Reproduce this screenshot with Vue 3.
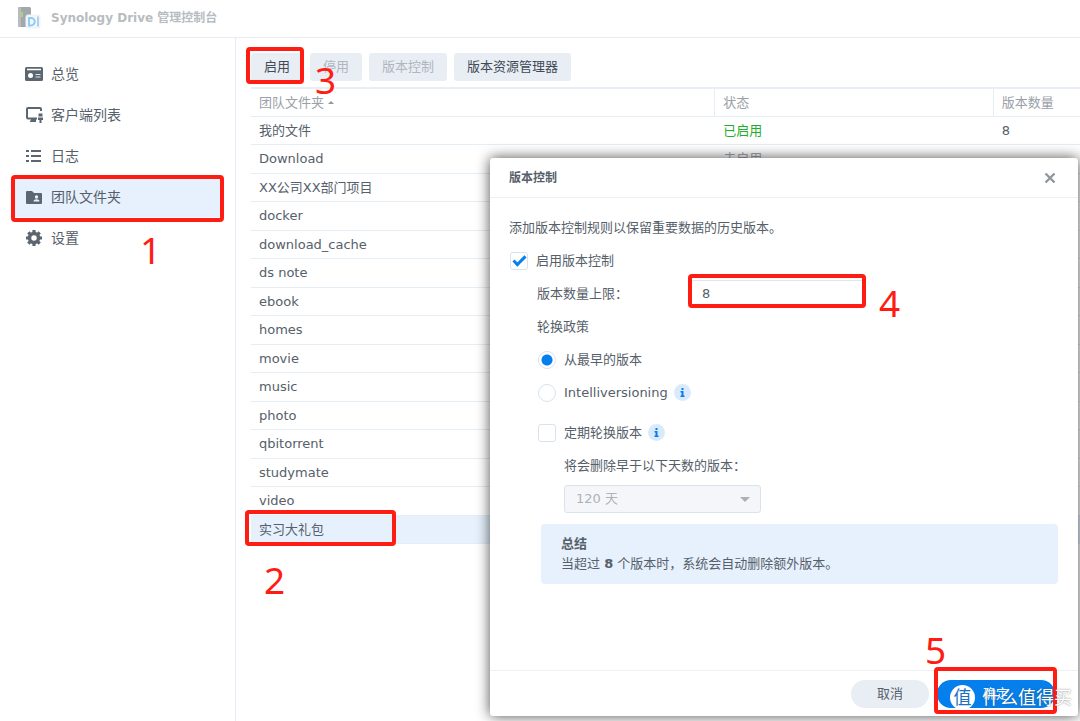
<script setup>
import { ref } from 'vue'

const navItems = [
  { id: 'overview', label: '总览' },
  { id: 'clients', label: '客户端列表' },
  { id: 'log', label: '日志' },
  { id: 'team', label: '团队文件夹' },
  { id: 'settings', label: '设置' },
]
const activeNav = ref('team')

const folders = [
  { name: '我的文件', status: '已启用', versions: '8', enabled: true },
  { name: 'Download', status: '未启用' },
  { name: 'XX公司XX部门项目' },
  { name: 'docker' },
  { name: 'download_cache' },
  { name: 'ds note' },
  { name: 'ebook' },
  { name: 'homes' },
  { name: 'movie' },
  { name: 'music' },
  { name: 'photo' },
  { name: 'qbitorrent' },
  { name: 'studymate' },
  { name: 'video' },
  { name: '实习大礼包' },
]
const selectedFolder = ref('实习大礼包')

const versioning = ref(true)
const maxVersions = ref('8')
const policy = ref('earliest')
const rotate = ref(false)
</script>

<template>
  <div class="app">
    <header class="titlebar">
      <svg class="logo" width="24" height="24" viewBox="0 0 24 24" aria-hidden="true">
        <rect x="1" y="1" width="13" height="20" rx="1.500" fill="#a3a6aa" />
        <rect x="1" y="1" width="3" height="20" rx="1" fill="#b9bbbe" />
        <rect x="4" y="6" width="2" height="5" fill="#a5d67c" />
        <rect x="9" y="9" width="14" height="13" rx="2" fill="#f3f7fa" stroke="#eef2f5" />
        <path d="M12 12h2a3.500 3.500 0 0 1 0 7.500H12z" fill="none" stroke="#8ccdf5" stroke-width="2" />
        <path d="M21 10.500v10" stroke="#9cc3f2" stroke-width="1.500" />
      </svg>
      <h1>Synology Drive 管理控制台</h1>
    </header>

    <div class="main">
      <nav class="sidebar">
        <a
          v-for="item in navItems"
          :key="item.id"
          href="#"
          :class="['nav-item', { active: activeNav === item.id }]"
          @click.prevent="activeNav = item.id"
        >
          <svg width="20" height="20" viewBox="0 0 20 20" aria-hidden="true">
            <g v-if="item.id === 'overview'">
              <rect x="1" y="3" width="18" height="14" rx="1.500" fill="#5b6670" />
              <path d="M3 5.500h14" stroke="#fff" stroke-width="1.500" />
              <circle cx="6.500" cy="11.500" r="2.500" fill="#fff" />
              <path d="M11.500 10.500h5M11.500 13h5" stroke="#dfe3e6" />
            </g>
            <g v-else-if="item.id === 'clients'">
              <path d="M13 13.500H4a1 1 0 0 1-1-1V4a1 1 0 0 1 1-1h12a1 1 0 0 1 1 1v2" fill="none" stroke="#5b6670" stroke-width="2" />
              <path d="M7 14h5v3H6v-1.500h1z" fill="#5b6670" />
              <path d="M14.500 8.500h4v3h-4zM14 12.500h5V15h-1.500v3h-2v-3H14z" fill="#5b6670" />
            </g>
            <g v-else-if="item.id === 'log'" fill="#5b6670">
              <path d="M2 4h3v2H2zM7 4h10v2H7zM2 9h3v2H2zM7 9h10v2H7zM2 14h3v2H2zM7 14h10v2H7z" />
            </g>
            <g v-else-if="item.id === 'team'">
              <path d="M2 5a1 1 0 0 1 1-1h5l2 2h7a1 1 0 0 1 1 1v9a1 1 0 0 1-1 1H3a1 1 0 0 1-1-1z" fill="#5b6670" />
              <circle cx="12.500" cy="10" r="1.700" fill="#e6f1fd" />
              <path d="M9.500 14.500c0-3 6-3 6 0z" fill="#e6f1fd" />
            </g>
            <g v-else>
              <circle cx="10" cy="10" r="4.500" fill="none" stroke="#5b6670" stroke-width="3.500" />
              <path
                d="M10 2v3M10 15v3M2 10h3M15 10h3M4.300 4.300l2 2M13.700 13.700l2 2M4.300 15.700l2-2M13.700 6.300l2-2"
                stroke="#5b6670"
                stroke-width="3.200"
              />
            </g>
          </svg>
          <span>{{ item.label }}</span>
        </a>
      </nav>

      <section class="content">
        <div class="toolbar">
          <button type="button" class="tool">启用</button>
          <button type="button" class="tool" disabled>停用</button>
          <button type="button" class="tool" disabled>版本控制</button>
          <button type="button" class="tool">版本资源管理器</button>
        </div>

        <table class="folders">
          <colgroup>
            <col class="col-name" />
            <col class="col-status" />
            <col />
          </colgroup>
          <thead>
            <tr>
              <th scope="col">团队文件夹<i class="sort"></i></th>
              <th scope="col">状态</th>
              <th scope="col">版本数量</th>
            </tr>
          </thead>
          <tbody>
            <tr
              v-for="folder in folders"
              :key="folder.name"
              :class="{ selected: folder.name === selectedFolder }"
              @click="selectedFolder = folder.name"
            >
              <td>{{ folder.name }}</td>
              <td :class="folder.enabled ? 'on' : 'off'">{{ folder.status }}</td>
              <td>{{ folder.versions }}</td>
            </tr>
          </tbody>
        </table>
      </section>
    </div>

    <div class="dialog" role="dialog" aria-labelledby="dialog-title">
      <div class="dialog-head">
        <h2 id="dialog-title">版本控制</h2>
        <button type="button" class="close" aria-label="关闭">
          <svg width="12" height="12" viewBox="0 0 12 12" aria-hidden="true">
            <path d="M1.500 1.500l9 9M10.500 1.500l-9 9" stroke="#8f979e" stroke-width="2.400" />
          </svg>
        </button>
      </div>

      <form class="dialog-body" @submit.prevent>
        <p class="line">添加版本控制规则以保留重要数据的历史版本。</p>
        <div class="line">
          <input id="versioning" v-model="versioning" type="checkbox" />
          <label for="versioning">启用版本控制</label>
        </div>
        <div class="line level1">
          <label for="max" class="field-label">版本数量上限：</label>
          <input id="max" v-model="maxVersions" type="text" class="text" />
        </div>
        <div class="line level1">轮换政策</div>
        <div class="line level1">
          <input id="earliest" v-model="policy" type="radio" value="earliest" name="policy" />
          <label for="earliest">从最早的版本</label>
        </div>
        <div class="line level1">
          <input id="intelli" v-model="policy" type="radio" value="intelli" name="policy" />
          <label for="intelli">Intelliversioning</label>
          <svg class="info" width="17" height="17" viewBox="0 0 17 17" aria-hidden="true">
            <circle cx="8.500" cy="8.500" r="8.500" fill="#d9eafc" />
            <path d="M7.500 4h2v2h-2zM6.500 7h3v4.500h1V13h-4v-1.500h1v-3h-1z" fill="#0a7ee8" />
          </svg>
        </div>
        <div class="line level1 spaced">
          <input id="rotate" v-model="rotate" type="checkbox" />
          <label for="rotate">定期轮换版本</label>
          <svg class="info" width="17" height="17" viewBox="0 0 17 17" aria-hidden="true">
            <circle cx="8.500" cy="8.500" r="8.500" fill="#d9eafc" />
            <path d="M7.500 4h2v2h-2zM6.500 7h3v4.500h1V13h-4v-1.500h1v-3h-1z" fill="#0a7ee8" />
          </svg>
        </div>
        <div class="line level2"><label for="days">将会删除早于以下天数的版本：</label></div>
        <div class="line level2 select-line">
          <div class="select">
            <select id="days" disabled>
              <option>120 天</option>
            </select>
          </div>
        </div>
        <div class="summary">
          <strong>总结</strong>
          <p>当超过 <b>8</b> 个版本时，系统会自动删除额外版本。</p>
        </div>
      </form>

      <div class="dialog-foot">
        <button type="button" class="pill">取消</button>
        <button type="button" class="pill primary">确定</button>
      </div>
    </div>

    <div class="mark mark-nav"></div>
    <div class="mark mark-enable"></div>
    <div class="mark mark-folder"></div>
    <div class="mark mark-max"></div>
    <div class="mark mark-ok"></div>
    <span class="step step-1">1</span>
    <span class="step step-2">2</span>
    <span class="step step-3">3</span>
    <span class="step step-4">4</span>
    <span class="step step-5">5</span>

    <div class="watermark"><span class="badge">值</span><span>什么值得买</span></div>
  </div>
</template>

<style>
body {
  margin: 0;
  background: #fff;
}
</style>

<style scoped>
.app {
  position: relative;
  display: flex;
  flex-direction: column;
  min-height: 100vh;
  overflow: hidden;
  box-sizing: border-box;
  color: #56606a;
  font-family: 'DejaVu Sans', 'Noto Sans CJK SC', sans-serif;
  font-size: 13px;
  line-height: 20px;
}
.app *,
.app *::before,
.app *::after {
  box-sizing: border-box;
}
h1,
h2,
p {
  margin: 0;
}
button,
input,
select {
  margin: 0;
  font: inherit;
  color: inherit;
}

.titlebar {
  display: flex;
  align-items: center;
  gap: 10px;
  height: 38px;
  padding: 0 17px 2px;
  border-bottom: 1px solid #e8ecf1;
}
.titlebar h1 {
  color: #b8bcc0;
  font-size: 12px;
}

.main {
  display: flex;
  flex: 1;
}
.sidebar {
  width: 236px;
  padding: 15px 13px 0 12px;
  border-right: 1px solid #e3ebf3;
}
.nav-item {
  display: flex;
  align-items: center;
  gap: 7px;
  height: 41px;
  padding: 0 12px;
  color: #56606a;
  font-size: 14px;
  text-decoration: none;
}
.nav-item.active {
  background: #e6f1fd;
}

.content {
  flex: 1;
  min-width: 0;
  padding: 15px 0 0 15px;
}
.toolbar {
  display: flex;
  gap: 7px;
  margin-bottom: 6px;
}
.tool {
  height: 28px;
  padding: 0 13px;
  border: 0;
  border-radius: 3px;
  background: #e9eef5;
  color: #414b55;
}
.tool:disabled {
  color: #b0b6bd;
}

.folders {
  width: 100%;
  border-collapse: separate;
  border-spacing: 0;
  border-top: 2px solid #e8eef4;
  table-layout: fixed;
}
.col-name {
  width: 56%;
}
.col-status {
  width: 33.6%;
}
.folders th,
.folders td {
  height: 28px;
  padding: 0 8px;
  border-bottom: 1px solid #e5edf5;
  text-align: left;
  white-space: nowrap;
}
.folders th {
  border-right: 1px solid #e5edf5;
  color: #9aa1a8;
  font-weight: 400;
}
.folders th:last-child {
  border-right: 0;
}
.folders tbody tr:nth-child(even) td {
  height: 29px;
}
.folders .selected td {
  background: #e6f1fd;
}
.folders .on {
  color: #1fae2b;
}
.folders .off {
  color: #a3a8ad;
}
.sort {
  display: inline-block;
  margin: 0 0 3px 4px;
  border: 3px solid transparent;
  border-top: 0;
  border-bottom-color: #8f979e;
}

.dialog {
  position: absolute;
  top: 158px;
  right: 2px;
  bottom: 5px;
  display: flex;
  flex-direction: column;
  width: 588px;
  border-radius: 3px;
  background: #fff;
  box-shadow: 0 0 14px rgba(0, 0, 0, 0.7);
}
.dialog-head {
  display: flex;
  align-items: center;
  justify-content: space-between;
  height: 40px;
  padding: 0 20px 0 19px;
  border-bottom: 1px solid #edf1f5;
}
.dialog-head h2 {
  font-size: 12px;
}
.close {
  display: flex;
  padding: 2px;
  border: 0;
  background: none;
}
.dialog-body {
  flex: 1;
  padding: 13px 20px 0 19px;
}
.line {
  display: flex;
  align-items: center;
  height: 33px;
}
.level1 {
  padding-left: 28px;
}
.level2 {
  padding-left: 55px;
}
.spaced {
  margin-top: 7px;
}
.field-label {
  width: 154px;
}
input[type='checkbox'],
input[type='radio'] {
  width: 18px;
  height: 18px;
  margin: 0 8px 0 1px;
  border: 1px solid #d9e3ed;
  border-radius: 3px;
  background: #fff;
  appearance: none;
}
input[type='radio'] {
  border-radius: 50%;
}
input[type='radio']:checked {
  background: radial-gradient(circle, #057feb 5px, #fff 6px);
}
input[type='checkbox']:checked {
  position: relative;
}
input[type='checkbox']:checked::after {
  position: absolute;
  top: 3px;
  left: 2px;
  width: 13px;
  height: 7px;
  border: solid #057feb;
  border-width: 0 0 3px 3px;
  content: '';
  transform: rotate(-45deg);
}
.text {
  width: 175px;
  height: 28px;
  padding: 0 10px;
  border: 1px solid #dfe7ef;
  border-radius: 3px;
}
.info {
  margin-left: 6px;
}
.select-line {
  margin-bottom: 9px;
}
.select {
  position: relative;
  width: 197px;
}
.select::after {
  position: absolute;
  top: 12px;
  right: 11px;
  border: 5px solid transparent;
  border-top-color: #a9b0b7;
  border-bottom: 0;
  content: '';
}
.select select {
  display: block;
  width: 100%;
  height: 28px;
  padding: 0 11px;
  border: 1px solid #d9e3ed;
  border-radius: 3px;
  background: #f4f6fa;
  color: #acb2b8;
  opacity: 1;
  appearance: none;
}
.summary {
  margin-left: 32px;
  padding: 10px 20px;
  border-radius: 4px;
  background: #e6f1fd;
}
.summary strong {
  display: block;
}
.dialog-foot {
  display: flex;
  justify-content: flex-end;
  gap: 8px;
  padding: 9px 23px 8px;
  border-top: 1px solid #edf1f5;
}
.pill {
  width: 78px;
  height: 28px;
  border: 0;
  border-radius: 14px;
  background: #e9eef5;
}
.primary {
  width: 118px;
  background: #057feb;
  color: #fff;
}

.mark {
  position: absolute;
  border: 4px solid #ff1c12;
  border-radius: 4px;
  pointer-events: none;
}
.mark-nav {
  top: 175px;
  left: 11px;
  width: 213px;
  height: 47px;
}
.mark-enable {
  top: 47px;
  left: 246px;
  width: 58px;
  height: 37px;
}
.mark-folder {
  top: 510px;
  left: 245px;
  width: 151px;
  height: 36px;
}
.mark-max {
  top: 274px;
  left: 688px;
  width: 178px;
  height: 34px;
}
.mark-ok {
  top: 667px;
  left: 934px;
  width: 123px;
  height: 47px;
}
.step {
  position: absolute;
  color: #ff1c12;
  font-family: 'Noto Sans', 'Open Sans', sans-serif;
  font-size: 37px;
  line-height: 40px;
}
.step-1 {
  top: 230px;
  left: 140px;
}
.step-2 {
  top: 560px;
  left: 264px;
}
.step-3 {
  top: 60px;
  left: 315px;
}
.step-4 {
  top: 283px;
  left: 879px;
}
.step-5 {
  top: 630px;
  left: 925px;
}

.watermark {
  position: absolute;
  top: 685px;
  left: 950px;
  display: flex;
  align-items: center;
  gap: 7px;
  color: #fff;
  font-size: 18px;
  line-height: 25px;
  text-shadow: 0 0 2px rgba(60, 70, 80, 0.7);
  white-space: nowrap;
  pointer-events: none;
}
.badge {
  width: 25px;
  border-radius: 50%;
  background: #fff;
  color: #1b6fc4;
  text-align: center;
  text-shadow: none;
}
</style>
